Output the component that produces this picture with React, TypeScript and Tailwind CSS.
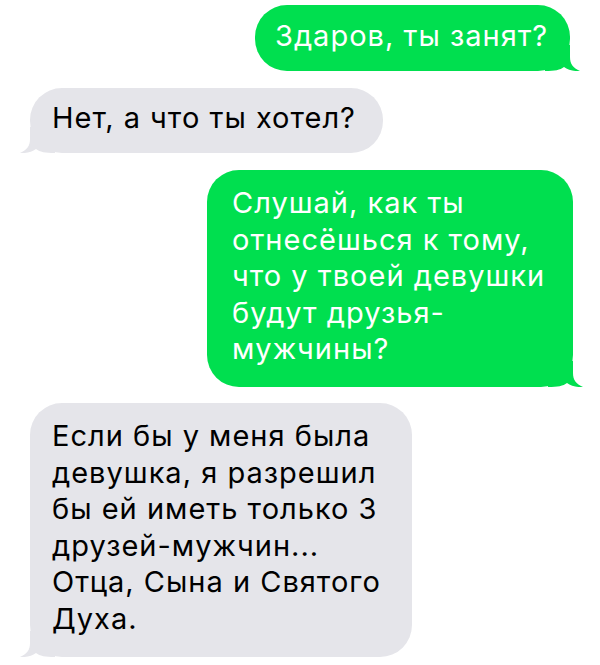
import React from "react";

function Tail({ color, side }: { color: string; side: "left" | "right" }) {
  const pos =
    side === "right"
      ? "absolute bottom-0 right-[-10px]"
      : "absolute bottom-0 left-[-10px] -scale-x-100";
  return (
    <svg className={pos} width="35" height="26" viewBox="0 0 35 26">
      <path
        d="M25,0 L25,12 C25,19 28,23 35,26 C29,26.5 23,25 19,22 C15,25 10,26 0,26 L0,0 Z"
        fill={color}
      />
    </svg>
  );
}

function Bubble({
  side,
  className,
  children,
}: {
  side: "left" | "right";
  className: string;
  children: React.ReactNode;
}) {
  const green = "#00DF4F";
  const gray = "#E5E5EA";
  const color = side === "right" ? green : gray;
  return (
    <div
      className={
        "relative rounded-[32px] text-[29px] leading-[36.5px] tracking-[1px] " +
        (side === "right" ? "bg-[#00DF4F] text-white" : "bg-[#E5E5EA] text-black") +
        " " +
        className
      }
    >
      <Tail color={color} side={side} />
      <div className="relative">{children}</div>
    </div>
  );
}

export default function App() {
  return (
    <div
      className="w-[600px] h-[665px] bg-white overflow-hidden flex flex-col pt-[5px]"
      style={{ fontFamily: 'Inter, "Liberation Sans", Arial, sans-serif' }}
    >
      <div className="flex justify-end pr-[30px]">
        <Bubble side="right" className="w-[315px] h-[66px] pl-[20px] pt-[13px]">
          Здаров, ты занят?
        </Bubble>
      </div>
      <div className="flex justify-start pl-[30px] mt-[17px]">
        <Bubble side="left" className="w-[353px] h-[65px] pl-[22px] pt-[12px]">
          Нет, а что ты хотел?
        </Bubble>
      </div>
      <div className="flex justify-end pr-[27px] mt-[17px]">
        <Bubble side="right" className="w-[366px] h-[217px] pl-[25px] pt-[15px]">
          Слушай, как ты
          <br />
          отнесёшься к тому,
          <br />
          что у твоей девушки
          <br />
          будут друзья-
          <br />
          мужчины?
        </Bubble>
      </div>
      <div className="flex justify-start pl-[30px] mt-[16px]">
        <Bubble side="left" className="w-[382px] h-[254px] pl-[22px] pt-[15px]">
          Если бы у меня была
          <br />
          девушка, я разрешил
          <br />
          бы ей иметь только 3
          <br />
          друзей-мужчин...
          <br />
          Отца, Сына и Святого
          <br />
          Духа.
        </Bubble>
      </div>
    </div>
  );
}
